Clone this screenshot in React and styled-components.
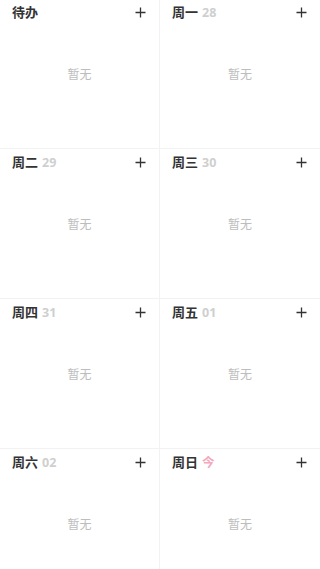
import styled, { createGlobalStyle } from "styled-components";

const GlobalStyle = createGlobalStyle`
  * { box-sizing: border-box; }
  html, body {
    margin: 0;
    padding: 0;
    background: #ffffff;
    overflow: hidden;
  }
  body {
    font-family: "Noto Sans CJK SC", "Noto Sans", sans-serif;
  }
`;

const Board = styled.div`
  width: 320px;
  margin-top: -1px;
  display: grid;
  grid-template-columns: 160px 160px;
  grid-auto-rows: 150px;
`;

const Cell = styled.div`
  display: flex;
  flex-direction: column;
  border-bottom: 1px solid #f2f2f2;
  border-right: ${(p) => (p.$left ? "1px solid #f2f2f2" : "none")};
`;

const Head = styled.div`
  height: 26px;
  padding: 0 12px;
  display: flex;
  align-items: center;
  justify-content: space-between;
`;

const Title = styled.div`
  display: flex;
  align-items: baseline;
  gap: 4px;
  font-size: 13px;
  font-weight: 700;
  color: #333333;
  line-height: 16px;
`;

const DateNum = styled.span`
  font-family: "Noto Sans", "Noto Sans CJK SC", sans-serif;
  font-size: 12.5px;
  font-weight: 700;
  line-height: 16px;
  color: ${(p) => (p.$today ? "#f3a9bb" : "#cfcfcf")};
`;

const TodayMark = styled.span`
  font-family: "Noto Sans CJK SC", sans-serif;
  font-size: 12.5px;
  font-weight: 700;
  line-height: 16px;
  color: #f3a9bb;
`;

const AddBtn = styled.button`
  width: 14px;
  height: 14px;
  padding: 0;
  border: none;
  background: none;
  display: flex;
  align-items: center;
  justify-content: center;
  cursor: pointer;
`;

const Empty = styled.div`
  flex: 1;
  display: flex;
  align-items: center;
  justify-content: center;
  padding-bottom: 26px;
  font-size: 12px;
  color: #bdbdbd;
`;

const Plus = () => (
  <svg width="11" height="11" viewBox="0 0 11 11">
    <path d="M5.5 0.5v10M0.5 5.5h10" stroke="#333" strokeWidth="1.3" fill="none" />
  </svg>
);

const days = [
  { name: "待办" },
  { name: "周一", date: "28" },
  { name: "周二", date: "29" },
  { name: "周三", date: "30" },
  { name: "周四", date: "31" },
  { name: "周五", date: "01" },
  { name: "周六", date: "02" },
  { name: "周日", today: true },
];

const App = () => {
  return (
    <>
      <GlobalStyle />
      <Board>
        {days.map((d, i) => (
          <Cell key={d.name} $left={i % 2 === 0}>
            <Head>
              <Title>
                {d.name}
                {d.date && <DateNum>{d.date}</DateNum>}
                {d.today && <TodayMark>今</TodayMark>}
              </Title>
              <AddBtn>
                <Plus />
              </AddBtn>
            </Head>
            <Empty>暂无</Empty>
          </Cell>
        ))}
      </Board>
    </>
  );
};

export default App;
